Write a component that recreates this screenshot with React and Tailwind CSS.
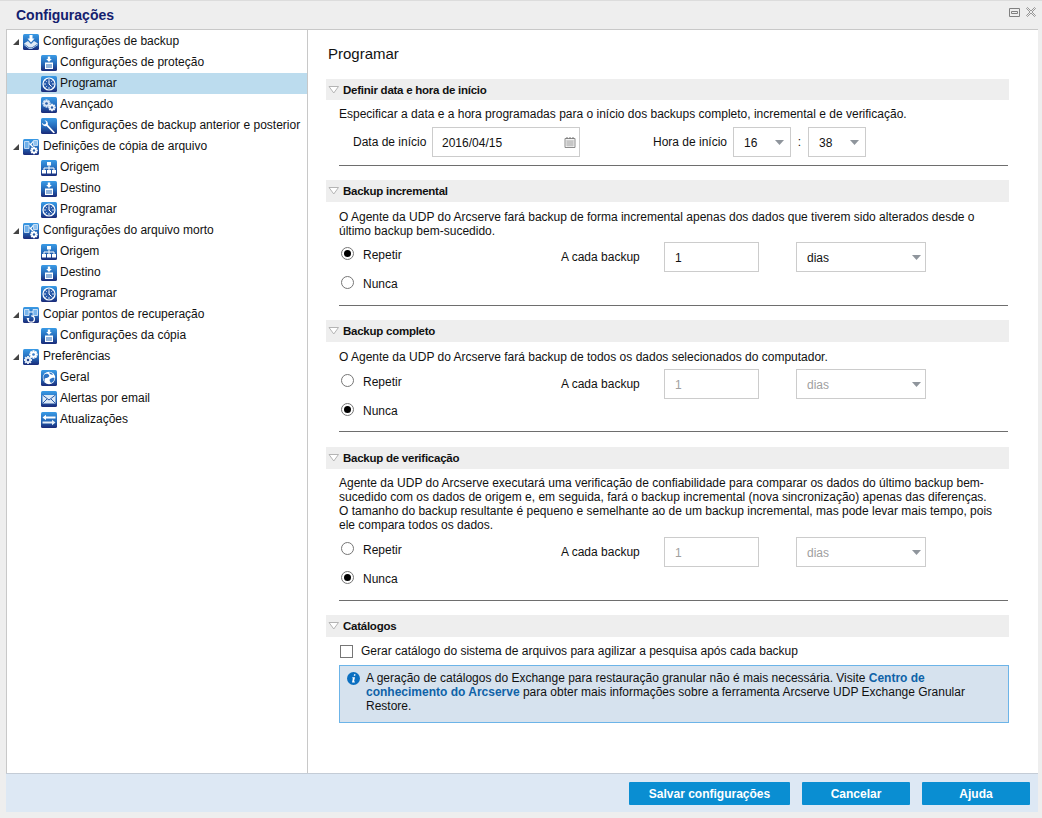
import React, { useId } from 'react';

function IconBase({ children }) {
  const id = useId();
  return (
    <svg width="16" height="16" viewBox="0 0 16 16" className="shrink-0">
      <defs>
        <linearGradient id={id} x1="0" y1="0" x2="0" y2="1">
          <stop offset="0" stopColor="#3a9be6" />
          <stop offset="0.55" stopColor="#2468b8" />
          <stop offset="1" stopColor="#1a2a78" />
        </linearGradient>
      </defs>
      <rect width="16" height="16" rx="1.5" fill={`url(#${id})`} />
      {children}
    </svg>
  );
}

function Gear({ cx, cy, r, fill = '#fff', hole = '#2a5fa8' }) {
  const teeth = [0, 45, 90, 135];
  return (
    <g>
      {teeth.map((a) => (
        <rect key={a} x={cx - r * 0.3} y={cy - r * 1.25} width={r * 0.6} height={r * 2.5} fill={fill} transform={`rotate(${a} ${cx} ${cy})`} />
      ))}
      <circle cx={cx} cy={cy} r={r * 0.9} fill={fill} />
      <circle cx={cx} cy={cy} r={r * 0.4} fill={hole} />
    </g>
  );
}

const icons = {
  backup: (
    <IconBase>
      <path d="M6.500 1h3v3.500h2L8 8.500 4.500 4.500h2z" fill="#fff" />
      <path d="M1 9.500 5 7l3 3 3-3 4 2.500L9 13.500H6z" fill="#dfe9f5" />
      <path d="M1 10.500 6 14.500h3l6-4" fill="none" stroke="#9fc3e8" />
    </IconBase>
  ),
  protect: (
    <IconBase>
      <path d="M6.800 1.500h2.400v2.500h1.600L8 7 5.200 4h1.600z" fill="#fff" />
      <rect x="4" y="7.500" width="8" height="6.500" fill="#fff" />
      <path d="M5 10h6M5 12h6" stroke="#2468b8" />
    </IconBase>
  ),
  schedule: (
    <IconBase>
      <circle cx="8" cy="8" r="6" fill="#2a5aa8" stroke="#fff" strokeWidth="1.200" />
      <path d="M8 3v2M8 11v2M3 8h2M11 8h2M4.500 4.500l1.300 1.300M11.500 4.500l-1.300 1.300M4.500 11.500l1.300-1.300M11.500 11.500l-1.300-1.300" stroke="#cfe0f4" />
      <path d="M8 8V5M8 8l2 2" stroke="#fff" />
    </IconBase>
  ),
  advanced: (
    <IconBase>
      <Gear cx={5.500} cy={6.500} r={3.300} fill="#d9e6f5" />
      <Gear cx={11} cy={10.500} r={3} fill="#eef4fb" />
    </IconBase>
  ),
  wrench: (
    <IconBase>
      <path d="M14 14.500 6.800 6.800c.6-2-.6-4.400-3.300-4.600l1.800 2-.6 1.800-1.800.6-2-1.800c.2 2.600 2.600 4 4.600 3.300l7 7.200z" fill="#fff" />
    </IconBase>
  ),
  filecopy: (
    <IconBase>
      <path d="M1.500 2.500h4.500v7H1.500z" fill="#6fb0ea" stroke="#dcebfa" strokeWidth=".8" />
      <path d="M6.500 4.500 10 8M10 2.500 7.500 6" stroke="#fff" strokeWidth="1.200" />
      <path d="M10.500 1.500h4v5h-4z" fill="#8fc2ef" stroke="#dcebfa" strokeWidth=".8" />
      <Gear cx={11} cy={11.500} r={3} />
    </IconBase>
  ),
  origin: (
    <IconBase>
      <rect x="6" y="2" width="4" height="3.500" fill="#fff" />
      <path d="M8 5.500V8M3 10V8h10v2M8 8v2" stroke="#fff" fill="none" />
      <rect x="1" y="10" width="4" height="3.500" fill="#fff" />
      <rect x="6" y="10" width="4" height="3.500" fill="#fff" />
      <rect x="11" y="10" width="4" height="3.500" fill="#fff" />
    </IconBase>
  ),
  copyrec: (
    <IconBase>
      <path d="M1.500 2.500h4.500v6H1.500zM10 2.500h4.500v6H10z" fill="#7ab6ec" stroke="#e3effb" strokeWidth=".8" />
      <path d="M6 5h4" stroke="#fff" />
      <path d="M5 12a3.200 3.200 0 1 0 3.200-3.200" fill="none" stroke="#fff" strokeWidth="1.300" />
      <path d="M3.500 11h3l-1.500 2.200z" fill="#fff" />
    </IconBase>
  ),
  prefs: (
    <IconBase>
      <Gear cx={10.500} cy={5.500} r={3.400} fill="#fff" hole="#3a80cc" />
      <Gear cx={5} cy={11} r={3.200} fill="#e4edf7" hole="#24468f" />
    </IconBase>
  ),
  globe: (
    <IconBase>
      <circle cx="8" cy="8" r="6.200" fill="#fff" />
      <path d="M3 5c2-2 4-1 5 0s-1 3-3 3-1.500 3-.5 4.500C3 11.500 1.500 7.500 3 5zM9 9c2-1 3.500-1.500 4.500-1 0 2.500-1.500 4.500-3.500 5-1-1-2-3-1-4zM8 2.500c1.500 0 3 .5 4 2-1 .5-3 0-4-2z" fill="#2f74c4" />
    </IconBase>
  ),
  mail: (
    <IconBase>
      <rect x="1.500" y="4" width="13" height="8.500" fill="#dce9f7" />
      <path d="m1.500 4 6.500 5 6.500-5M1.500 12.500l4.500-4.500M14.500 12.500 10 8" fill="none" stroke="#2a5aa8" />
    </IconBase>
  ),
  updates: (
    <IconBase>
      <path d="M1.500 5.500 5 2.800v1.700h9.500v2H5v1.700z" fill="#fff" />
      <path d="M14.500 10.500 11 7.800v1.700H1.500v2H11v1.700z" fill="#e4edf7" />
    </IconBase>
  ),
};

const tree = [
  { label: 'Configurações de backup', icon: 'backup', kids: [
    { label: 'Configurações de proteção', icon: 'protect' },
    { label: 'Programar', icon: 'schedule', selected: true },
    { label: 'Avançado', icon: 'advanced' },
    { label: 'Configurações de backup anterior e posterior', icon: 'wrench' },
  ] },
  { label: 'Definições de cópia de arquivo', icon: 'filecopy', kids: [
    { label: 'Origem', icon: 'origin' },
    { label: 'Destino', icon: 'protect' },
    { label: 'Programar', icon: 'schedule' },
  ] },
  { label: 'Configurações do arquivo morto', icon: 'filecopy', kids: [
    { label: 'Origem', icon: 'origin' },
    { label: 'Destino', icon: 'protect' },
    { label: 'Programar', icon: 'schedule' },
  ] },
  { label: 'Copiar pontos de recuperação', icon: 'copyrec', kids: [
    { label: 'Configurações da cópia', icon: 'protect' },
  ] },
  { label: 'Preferências', icon: 'prefs', kids: [
    { label: 'Geral', icon: 'globe' },
    { label: 'Alertas por email', icon: 'mail' },
    { label: 'Atualizações', icon: 'updates' },
  ] },
];

function Tree() {
  return (
    <div className="w-[302px] shrink-0 bg-white border-l border-r border-[#c8c8c8] pt-px">
      {tree.map((g) => (
        <div key={g.label}>
          <div className="h-[21px] flex items-center">
            <svg width="6" height="6" viewBox="0 0 6 6" className="ml-[6px] mr-[4px] shrink-0">
              <path d="M6 0v6H0z" fill="#444" />
            </svg>
            {icons[g.icon]}
            <span className="ml-[4px] mb-[2px] whitespace-nowrap">{g.label}</span>
          </div>
          {g.kids.map((k) => (
            <div key={k.label} className={`h-[21px] flex items-center pl-[34px] ${k.selected ? 'bg-[#bcdcee]' : ''}`}>
              {icons[k.icon]}
              <span className="ml-[3px] mb-[2px] whitespace-nowrap">{k.label}</span>
            </div>
          ))}
        </div>
      ))}
    </div>
  );
}

function SectionBar({ title, tall }) {
  return (
    <div className={`${tall ? 'h-[22px]' : 'h-[21px]'} bg-[#eeeeee] flex items-center pl-[2px]`}>
      <svg width="12" height="8" viewBox="0 0 12 8" className="shrink-0">
        <path d="M1 .5h9.500L5.750 7z" fill="#fff" stroke="#b4b4b4" />
      </svg>
      <span className="ml-[3px] mt-[2px] text-[11.5px] font-bold tracking-[-0.25px] text-[#111]">{title}</span>
    </div>
  );
}

function Arrow() {
  return (
    <svg width="9" height="5" viewBox="0 0 9 5" className="shrink-0">
      <path d="M0 0h9L4.500 5z" fill="#8f959c" />
    </svg>
  );
}

function Radio({ on, label }) {
  return (
    <div className="h-[24px] flex items-center">
      <span className="mb-[2px] w-[13px] h-[13px] ml-[2px] rounded-full border border-[#767676] bg-white flex items-center justify-center shrink-0">
        {on && <span className="w-[7px] h-[7px] rounded-full bg-black" />}
      </span>
      <span className="ml-[9px] mt-[2px]">{label}</span>
    </div>
  );
}

function RepeatRow({ repeat, disabled }) {
  return (
    <div className="flex">
      <div className="w-[222px] flex flex-col gap-[5px]">
        <Radio on={repeat} label="Repetir" />
        <Radio on={!repeat} label="Nunca" />
      </div>
      <div className="h-[30px] flex items-center">
        <span className="w-[103px]">A cada backup</span>
        <div className={`w-[95px] h-[30px] border border-[#cccccc] bg-white flex items-center pl-[10px] pt-px ${disabled ? 'text-[#a0a0a0]' : ''}`}>1</div>
        <div className={`ml-[37px] w-[130px] h-[30px] border border-[#cccccc] bg-white flex items-center justify-between pl-[10px] pr-[4px] ${disabled ? 'text-[#a0a0a0]' : ''}`}>
          <span className="pt-px">dias</span>
          <Arrow />
        </div>
      </div>
    </div>
  );
}

function Rule({ className }) {
  return <div className={`h-px bg-[#6e6e6e] mr-px ${className}`} />;
}

function TimeSelect({ value }) {
  return (
    <div className="w-[58px] h-[30px] border border-[#cccccc] bg-white flex items-center justify-between pl-[10px] pr-[6px]">
      <span className="pt-px">{value}</span>
      <Arrow />
    </div>
  );
}

function Content() {
  return (
    <div className="flex-1 bg-white pl-[18px] pr-[29px]">
      <div className="h-[49px] pt-[15px] text-[15px] leading-[18px] pl-[2px]">Programar</div>

      <SectionBar title="Definir data e hora de início" />
      <div className="pl-[13px]">
        <p className="mt-[7px] leading-[14px]">Especificar a data e a hora programadas para o início dos backups completo, incremental e de verificação.</p>
        <div className="mt-[6px] h-[30px] flex items-center">
          <span className="ml-[14px] w-[79px]">Data de início</span>
          <div className="w-[148px] h-[30px] border border-[#cccccc] bg-white flex items-center justify-between pl-[9px] pr-[3px]">
            <span className="pt-px">2016/04/15</span>
            <svg width="12" height="12" viewBox="0 0 12 12" className="shrink-0">
              <path d="M1 2.500h10v9H1z" fill="#f3f3f3" stroke="#8c8c8c" />
              <path d="M3 1v2M6 1v2M9 1v2" stroke="#777" />
              <path d="M2 5h8M2 7h8M2 9h8M4 4.500v6M6 4.500v6M8 4.500v6" stroke="#a8a8a8" strokeWidth=".7" />
            </svg>
          </div>
          <span className="ml-[73px] w-[80px]">Hora de início</span>
          <TimeSelect value="16" />
          <span className="w-[17px] text-center">:</span>
          <TimeSelect value="38" />
        </div>
        <Rule className="mt-[8px]" />
      </div>

      <div className="mt-[14px]"><SectionBar title="Backup incremental" tall /></div>
      <div className="pl-[13px]">
        <p className="mt-[8px] leading-[14px]">O Agente da UDP do Arcserve fará backup de forma incremental apenas dos dados que tiverem sido alterados desde o<br />último backup bem-sucedido.</p>
        <div className="mt-[4px]"><RepeatRow repeat /></div>
        <Rule className="mt-[10px]" />
      </div>

      <div className="mt-[14px]"><SectionBar title="Backup completo" tall /></div>
      <div className="pl-[13px]">
        <p className="mt-[8px] leading-[14px]">O Agente da UDP do Arcserve fará backup de todos os dados selecionados do computador.</p>
        <div className="mt-[5px]"><RepeatRow disabled /></div>
        <Rule className="mt-[9px]" />
      </div>

      <div className="mt-[15px]"><SectionBar title="Backup de verificação" tall /></div>
      <div className="pl-[13px]">
        <p className="mt-[7px] leading-[14px]">Agente da UDP do Arcserve executará uma verificação de confiabilidade para comparar os dados do último backup bem-<br />sucedido com os dados de origem e, em seguida, fará o backup incremental (nova sincronização) apenas das diferenças.<br />O tamanho do backup resultante é pequeno e semelhante ao de um backup incremental, mas pode levar mais tempo, pois<br />ele compara todos os dados.</p>
        <div className="mt-[5px]"><RepeatRow disabled /></div>
        <Rule className="mt-[10px]" />
      </div>

      <div className="mt-[14px]"><SectionBar title="Catálogos" tall /></div>
      <div className="pl-[13px]">
        <div className="mt-[7px] h-[14px] flex items-center">
          <span className="w-[13px] h-[13px] ml-px border border-[#767676] bg-white shrink-0" />
          <span className="ml-[8px]">Gerar catálogo do sistema de arquivos para agilizar a pesquisa após cada backup</span>
        </div>
        <div className="mt-[7px] h-[58px] border border-[#6cb4e8] bg-[#d6e2ee] flex pl-[7px] pt-[5px] leading-[14px]">
          <svg width="13" height="13" viewBox="0 0 13 13" className="shrink-0 mt-px">
            <circle cx="6.500" cy="6.500" r="6.500" fill="#0b6fc0" />
            <path d="M7 2.200h1.500L8.200 3.800H6.800zM5.400 5.300H8L7 9.500h1l-.2.900H5l.9-4.200h-.7z" fill="#fff" />
          </svg>
          <p className="ml-[6px]">A geração de catálogos do Exchange para restauração granular não é mais necessária. Visite <a className="font-bold text-[#0f62a8]">Centro de<br />conhecimento do Arcserve</a> para obter mais informações sobre a ferramenta Arcserve UDP Exchange Granular<br />Restore.</p>
        </div>
      </div>
    </div>
  );
}

function Footer() {
  return (
    <div className="h-[38px] shrink-0 bg-[#dde8f4] flex items-start justify-end gap-[12px] pt-[8px] pr-[8px]">
      <button className="w-[161px] h-[23px] bg-[#0a8ed2] text-white font-bold rounded-[1px]">Salvar configurações</button>
      <button className="w-[108px] h-[23px] bg-[#0a8ed2] text-white font-bold rounded-[1px]">Cancelar</button>
      <button className="w-[108px] h-[23px] bg-[#0a8ed2] text-white font-bold rounded-[1px]">Ajuda</button>
    </div>
  );
}

export default function App() {
  return (
    <div className="w-[1042px] h-[818px] overflow-hidden bg-[#eeeeee] flex flex-col font-['Liberation_Sans',Arial,sans-serif] text-[12px] text-[#111]">
      <div className="h-[29px] shrink-0 flex items-center justify-between pl-[16px] pr-[6px] border-t border-[#dcdcdc]">
        <span className="text-[#14206e] font-bold text-[14px] mt-px">Configurações</span>
        <div className="flex items-center gap-[6px] mb-[6px]">
          <svg width="11" height="9" viewBox="0 0 11 9">
            <path d="M.5.500h10v8H.5z" fill="none" stroke="#808080" />
            <path d="M2.500 3.500h6v2h-6z" fill="none" stroke="#808080" />
          </svg>
          <svg width="10" height="10" viewBox="0 0 10 10">
            <path d="M.5 1.500 1.500.5 5 4 8.500.5l1 1L6 5l3.500 3.500-1 1L5 6 1.500 9.500l-1-1L4 5z" stroke="#808080" strokeWidth=".8" fill="#eeeeee" />
          </svg>
        </div>
      </div>
      <div className="ml-[6px] mr-[4px] flex-1 flex flex-col border-t border-[#c8c8c8] min-h-0">
        <div className="flex-1 flex min-h-0 border-b border-[#c4ccd6]">
          <Tree />
          <Content />
        </div>
        <Footer />
      </div>
      <div className="h-[6px] shrink-0" />
    </div>
  );
}
